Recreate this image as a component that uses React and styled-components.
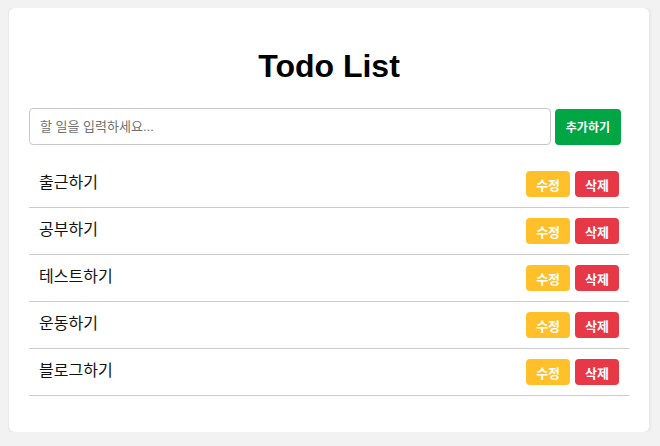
import React, { useState } from 'react';
import styled, { createGlobalStyle } from 'styled-components';

const GlobalStyle = createGlobalStyle`
  body {
    margin: 8px;
    background: #f2f2f2;
    font-family: "Liberation Sans", "Noto Sans CJK KR", Arial, sans-serif;
  }
`;

const Card = styled.div`
  width: 640px;
  box-sizing: border-box;
  margin: 0 0 0 1px;
  padding: 20px;
  background: #fff;
  border-radius: 6px;
  box-shadow: 0 0 10px rgba(0, 0, 0, 0.08);
`;

const Title = styled.h1`
  margin: 20px 0 23px;
  text-align: center;
  font-size: 32px;
  font-weight: 700;
  color: #000;
`;

const Form = styled.form`
  display: flex;
  align-items: center;
  gap: 4px;
  padding-right: 8px;
`;

const Input = styled.input`
  flex: 1;
  height: 37px;
  box-sizing: border-box;
  padding: 0 10px;
  border: 1px solid #c8c8c8;
  border-radius: 4px;
  font-family: "Liberation Sans", "Noto Sans CJK KR", sans-serif;
  font-size: 13px;
  outline: none;

  &::placeholder {
    color: #6f6f6f;
  }
`;

const Button = styled.button`
  border: none;
  border-radius: 4px;
  color: #fff;
  font-family: "Liberation Sans", "Noto Sans CJK KR", sans-serif;
  font-weight: 700;
  cursor: pointer;
  background: ${(p) => p.$bg};
`;

const AddButton = styled(Button)`
  height: 36px;
  padding: 0 11px;
  font-size: 12px;
`;

const SmallButton = styled(Button)`
  height: 26px;
  padding: 0 10px;
  font-size: 13px;
`;

const List = styled.ul`
  list-style: none;
  margin: 16px 0 16px;
  padding: 0;
`;

const Item = styled.li`
  display: flex;
  align-items: center;
  justify-content: space-between;
  height: 46px;
  padding: 0 10px;
  border-bottom: 1px solid #cccccc;
  font-size: 16px;
  color: #111;
`;

const Label = styled.span`
  margin-top: -6px;
`;

const Actions = styled.div`
  display: flex;
  gap: 5px;
`;

const initialTodos = ['출근하기', '공부하기', '테스트하기', '운동하기', '블로그하기'];

export default function App() {
  const [todos, setTodos] = useState(initialTodos);
  const [text, setText] = useState('');

  const addTodo = (e) => {
    e.preventDefault();
    if (!text.trim()) return;
    setTodos((prev) => [...prev, text.trim()]);
    setText('');
  };

  return (
    <>
      <GlobalStyle />
      <Card>
        <Title>Todo List</Title>
        <Form onSubmit={addTodo}>
          <Input
            placeholder="할 일을 입력하세요..."
            value={text}
            onChange={(e) => setText(e.target.value)}
          />
          <AddButton type="submit" $bg="#00a644">추가하기</AddButton>
        </Form>
        <List>
          {todos.map((todo, i) => (
            <Item key={i}>
              <Label>{todo}</Label>
              <Actions>
                <SmallButton $bg="#ffc02a">수정</SmallButton>
                <SmallButton
                  $bg="#e63847"
                  onClick={() => setTodos((prev) => prev.filter((_, j) => j !== i))}
                >
                  삭제
                </SmallButton>
              </Actions>
            </Item>
          ))}
        </List>
      </Card>
    </>
  );
}
